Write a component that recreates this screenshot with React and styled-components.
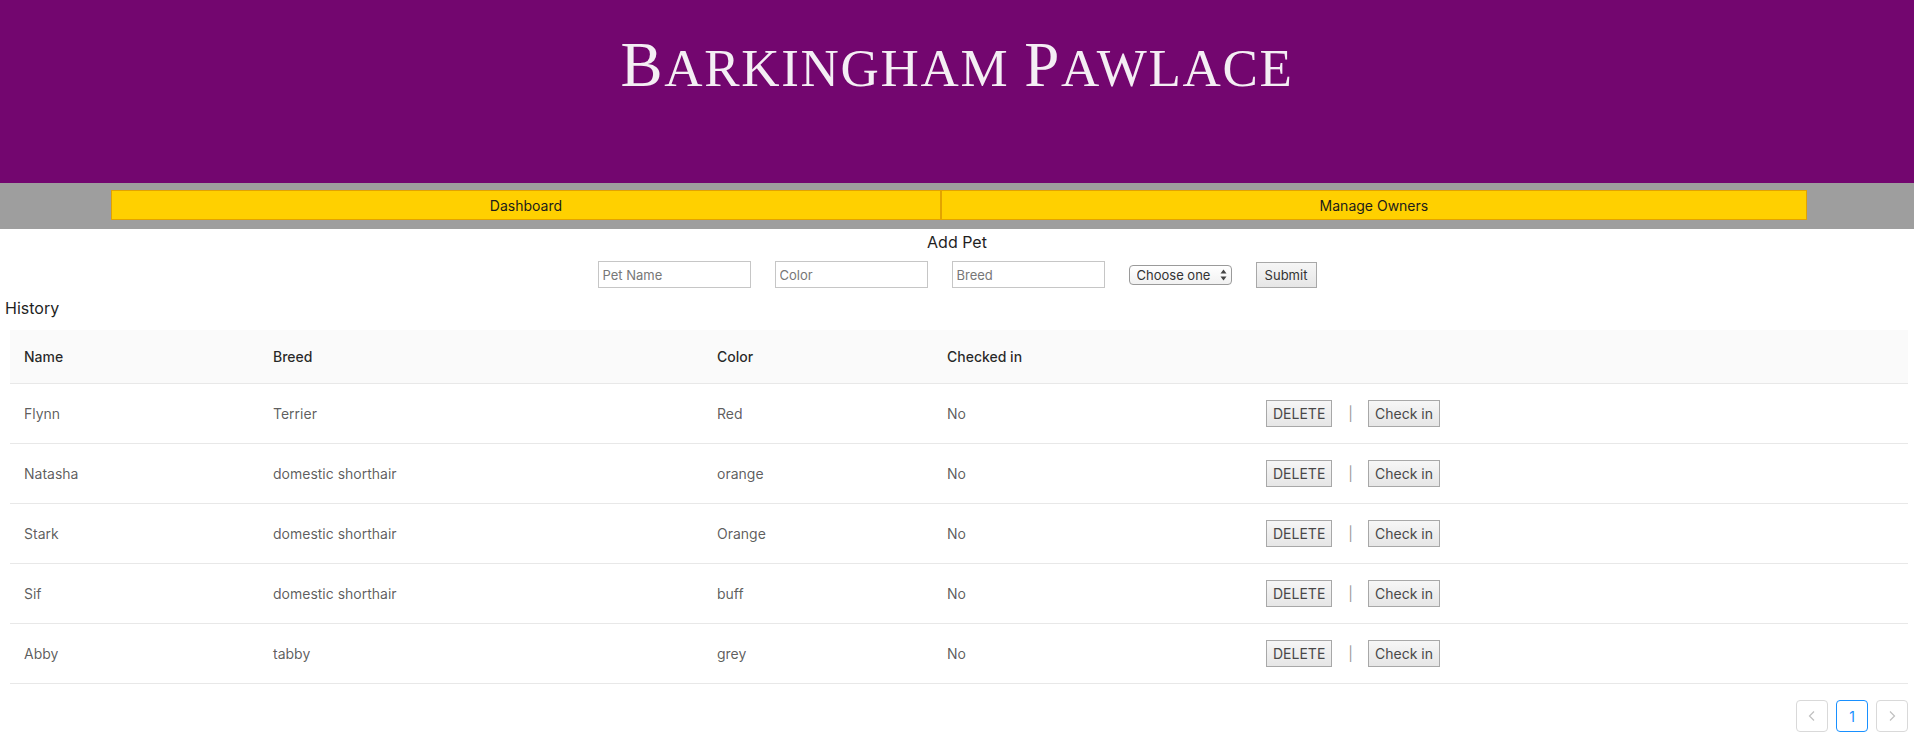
import React from 'react';
import styled, { createGlobalStyle } from 'styled-components';

const GlobalStyle = createGlobalStyle`
  html, body { margin: 0; padding: 0; background: #fff; }
  body {
    font-family: Inter, "Noto Sans", sans-serif;
    font-size: 14px;
    color: rgba(0, 0, 0, 0.65);
  }
  * { box-sizing: border-box; }
`;

const Header = styled.header`
  height: 183px;
  background: #73066f;
  display: flex;
  justify-content: center;
  align-items: flex-start;
`;

const Title = styled.h1`
  margin: 0;
  padding-top: 27px;
  font-family: "Liberation Serif", "DejaVu Serif", serif;
  font-weight: 400;
  text-transform: uppercase;
  font-size: 53px;
  line-height: 76px;
  letter-spacing: 1.7px;
  color: #f4eef4;
`;

const BigCap = styled.span`
  font-size: 63px;
`;

const Nav = styled.nav`
  background: #9e9e9e;
  display: flex;
  padding: 7px 107px 9px 111px;
`;

const NavButton = styled.a`
  flex: 1 1 auto;
  height: 30px;
  display: flex;
  align-items: center;
  justify-content: center;
  background: #ffd000;
  border: 1px solid #e2a300;
  color: #1c1c1c;
  font-size: 14px;
  text-decoration: none;
  cursor: pointer;
`;

const AddSection = styled.section`
  display: flex;
  flex-direction: column;
  align-items: center;
`;

const SectionTitle = styled.div`
  margin-top: 3px;
  font-size: 16px;
  line-height: 20px;
  color: #1f1f1f;
`;

const Form = styled.form`
  margin-top: 9px;
  display: flex;
  align-items: center;
  gap: 24px;
`;

const TextInput = styled.input`
  width: 153px;
  height: 27px;
  border: 1px solid #c6c6c6;
  padding: 0 4px;
  font-family: Inter, "Noto Sans", sans-serif;
  font-size: 13px;
  color: #333;
  background: #fff;
  outline: none;
  &::placeholder { color: #777; }
`;

const SelectWrap = styled.div`
  position: relative;
  display: flex;
`;

const Select = styled.select`
  appearance: none;
  -webkit-appearance: none;
  width: 103px;
  height: 20px;
  padding: 0 16px 0 7px;
  border: 1px solid #9a9a9a;
  border-radius: 4px;
  background: linear-gradient(#ffffff, #f1f1f1);
  font-family: Inter, "Noto Sans", sans-serif;
  font-size: 13px;
  color: #333;
  outline: none;
`;

const SelectArrows = styled.svg`
  position: absolute;
  right: 5px;
  top: 4px;
  pointer-events: none;
`;

const GrayButton = styled.button`
  height: 27px;
  padding: 0 6px;
  border: 1px solid #a8a8a8;
  border-radius: 0;
  background: linear-gradient(#f6f6f6, #e6e6e6);
  font-family: Inter, "Noto Sans", sans-serif;
  font-size: 14px;
  color: #484848;
  cursor: pointer;
`;

const SubmitButton = styled(GrayButton)`
  width: 61px;
  height: 26px;
  font-size: 13px;
  color: #333;
`;

const History = styled.div`
  margin-top: 10px;
  padding-left: 5px;
  font-size: 16px;
  line-height: 20px;
  color: #1f1f1f;
`;

const TableWrap = styled.div`
  margin: 12px 6px 0 10px;
`;

const Table = styled.table`
  width: 100%;
  border-collapse: collapse;
  table-layout: fixed;
`;

const Th = styled.th`
  width: ${(p) => (p.$w ? `${p.$w}px` : 'auto')};
  padding: 16px 14px;
  text-align: left;
  font-weight: 500;
  line-height: 21px;
  color: rgba(0, 0, 0, 0.85);
  background: #fafafa;
  border-bottom: 1px solid #e8e8e8;
`;

const Td = styled.td`
  padding: 16px 14px;
  line-height: 21px;
  color: rgba(0, 0, 0, 0.65);
  border-bottom: 1px solid #e8e8e8;
  vertical-align: middle;
`;

const Actions = styled.div`
  display: flex;
  align-items: center;
`;

const Pipe = styled.span`
  margin: 0 15px 0 16px;
  color: #999;
`;

const Pagination = styled.ul`
  list-style: none;
  margin: 16px 6px 0 10px;
  padding: 0;
  display: flex;
  justify-content: flex-end;
  gap: 8px;
`;

const PageItem = styled.li`
  width: 32px;
  height: 32px;
  display: flex;
  align-items: center;
  justify-content: center;
  border: 1px solid ${(p) => (p.$active ? '#1890ff' : '#d9d9d9')};
  border-radius: 4px;
  color: ${(p) => (p.$active ? '#1890ff' : 'rgba(0,0,0,0.25)')};
  font-size: 14px;
  background: #fff;
`;

const pets = [
  { name: 'Flynn', breed: 'Terrier', color: 'Red' },
  { name: 'Natasha', breed: 'domestic shorthair', color: 'orange' },
  { name: 'Stark', breed: 'domestic shorthair', color: 'Orange' },
  { name: 'Sif', breed: 'domestic shorthair', color: 'buff' },
  { name: 'Abby', breed: 'tabby', color: 'grey' },
];

const Chevron = ({ dir }) => (
  <svg width="12" height="12" viewBox="0 0 12 12">
    <polyline
      points={dir === 'left' ? '8,1.5 3.5,6 8,10.5' : '4,1.5 8.5,6 4,10.5'}
      fill="none"
      stroke="currentColor"
      strokeWidth="1.2"
    />
  </svg>
);

export default function App() {
  return (
    <>
      <GlobalStyle />
      <Header>
        <Title>
          <BigCap>B</BigCap>arkingham <BigCap>P</BigCap>awlace
        </Title>
      </Header>
      <Nav>
        <NavButton>Dashboard</NavButton>
        <NavButton>Manage Owners</NavButton>
      </Nav>
      <AddSection>
        <SectionTitle>Add Pet</SectionTitle>
        <Form onSubmit={(e) => e.preventDefault()}>
          <TextInput placeholder="Pet Name" />
          <TextInput placeholder="Color" />
          <TextInput placeholder="Breed" />
          <SelectWrap>
            <Select defaultValue="">
              <option value="">Choose one</option>
            </Select>
            <SelectArrows width="7" height="12" viewBox="0 0 7 12">
              <polygon points="3.5,0.5 6.5,4.5 0.5,4.5" fill="#444" />
              <polygon points="0.5,7.5 6.5,7.5 3.5,11.5" fill="#444" />
            </SelectArrows>
          </SelectWrap>
          <SubmitButton type="submit">Submit</SubmitButton>
        </Form>
      </AddSection>
      <History>History</History>
      <TableWrap>
        <Table>
          <thead>
            <tr>
              <Th $w={249}>Name</Th>
              <Th $w={444}>Breed</Th>
              <Th $w={230}>Color</Th>
              <Th $w={319}>Checked in</Th>
              <Th />
            </tr>
          </thead>
          <tbody>
            {pets.map((p) => (
              <tr key={p.name}>
                <Td>{p.name}</Td>
                <Td>{p.breed}</Td>
                <Td>{p.color}</Td>
                <Td>No</Td>
                <Td>
                  <Actions>
                    <GrayButton>DELETE</GrayButton>
                    <Pipe>|</Pipe>
                    <GrayButton>Check in</GrayButton>
                  </Actions>
                </Td>
              </tr>
            ))}
          </tbody>
        </Table>
      </TableWrap>
      <Pagination>
        <PageItem>
          <Chevron dir="left" />
        </PageItem>
        <PageItem $active>1</PageItem>
        <PageItem>
          <Chevron dir="right" />
        </PageItem>
      </Pagination>
    </>
  );
}
